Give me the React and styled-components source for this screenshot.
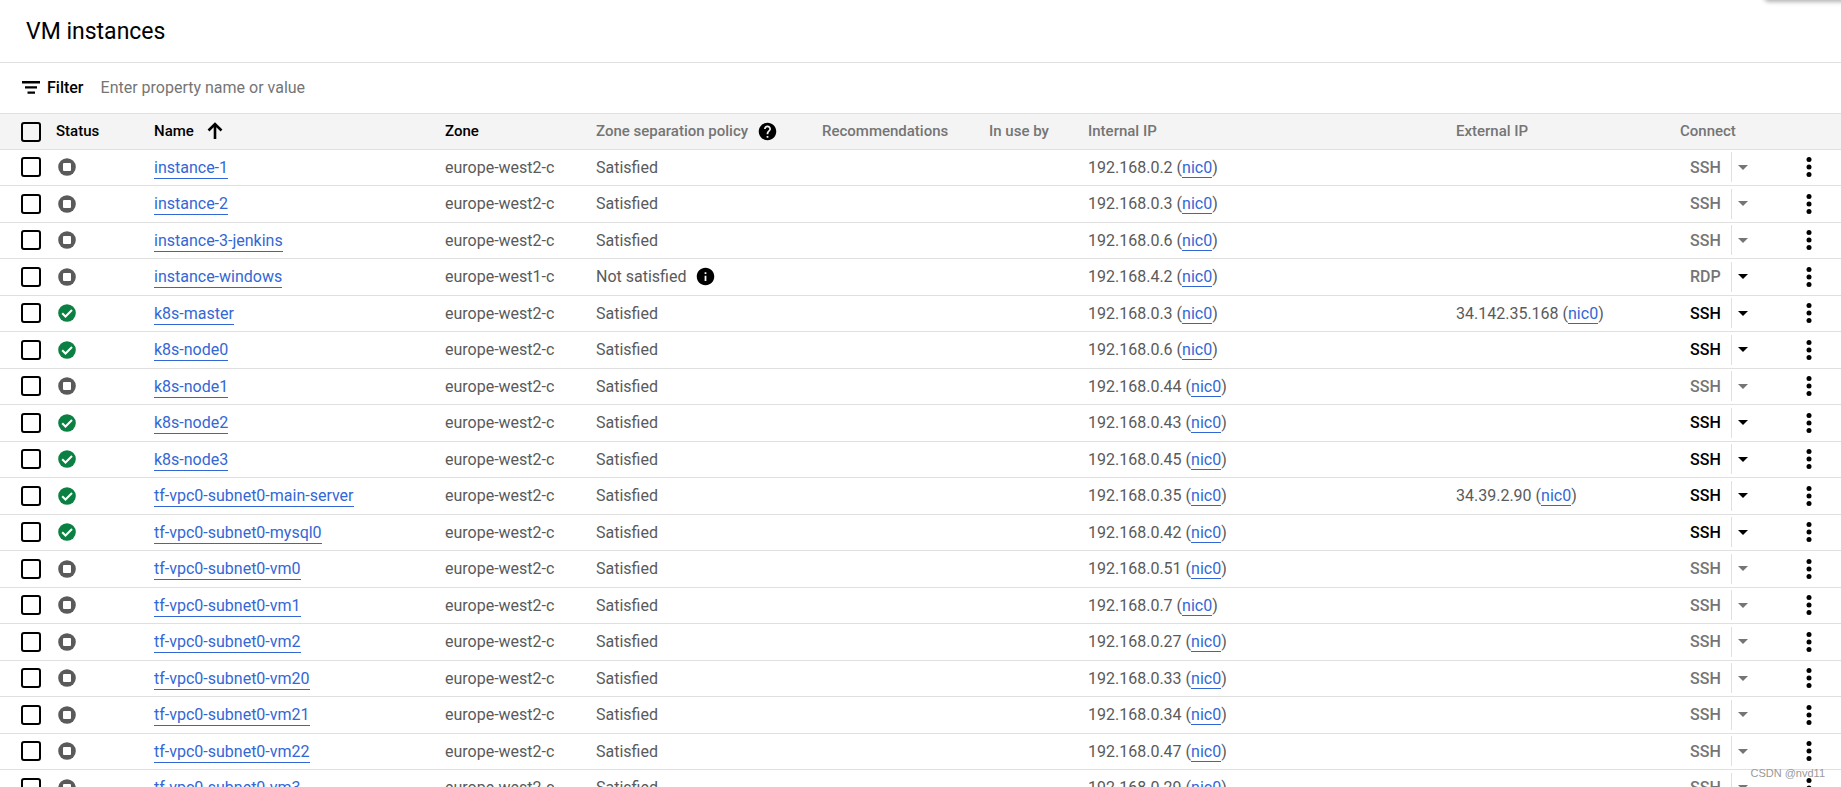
import React from "react";
import styled, { createGlobalStyle, css } from "styled-components";
import { MdHelp, MdInfo } from "react-icons/md";

const stoppedVm = (name, internalIp) => ({
  name,
  internalIp,
  zone: "europe-west2-c",
  policy: "Satisfied",
  connect: "SSH",
  running: false,
});

const runningVm = (name, internalIp, externalIp) => ({
  ...stoppedVm(name, internalIp),
  externalIp,
  running: true,
});

const instances = [
  stoppedVm("instance-1", "192.168.0.2"),
  stoppedVm("instance-2", "192.168.0.3"),
  stoppedVm("instance-3-jenkins", "192.168.0.6"),
  {
    ...stoppedVm("instance-windows", "192.168.4.2"),
    zone: "europe-west1-c",
    policy: "Not satisfied",
    connect: "RDP",
  },
  runningVm("k8s-master", "192.168.0.3", "34.142.35.168"),
  runningVm("k8s-node0", "192.168.0.6"),
  stoppedVm("k8s-node1", "192.168.0.44"),
  runningVm("k8s-node2", "192.168.0.43"),
  runningVm("k8s-node3", "192.168.0.45"),
  runningVm("tf-vpc0-subnet0-main-server", "192.168.0.35", "34.39.2.90"),
  runningVm("tf-vpc0-subnet0-mysql0", "192.168.0.42"),
  stoppedVm("tf-vpc0-subnet0-vm0", "192.168.0.51"),
  stoppedVm("tf-vpc0-subnet0-vm1", "192.168.0.7"),
  stoppedVm("tf-vpc0-subnet0-vm2", "192.168.0.27"),
  stoppedVm("tf-vpc0-subnet0-vm20", "192.168.0.33"),
  stoppedVm("tf-vpc0-subnet0-vm21", "192.168.0.34"),
  stoppedVm("tf-vpc0-subnet0-vm22", "192.168.0.47"),
  stoppedVm("tf-vpc0-subnet0-vm3", "192.168.0.29"),
];

const FilterIcon = () => (
  <svg width="18" height="13" viewBox="0 0 18 13" aria-hidden="true">
    <path d="M0 0h18v2.4H0zM3 5.2h12v2.4H3zM5.5 10.4h7.5v2.4H5.5z" />
  </svg>
);

const SortIcon = () => (
  <svg width="24" height="24" viewBox="0 0 24 24" aria-hidden="true">
    <path
      d="M12 20V5M5.5 11.5 12 5l6.500 6.500"
      fill="none"
      stroke="#000"
      strokeWidth="2.6"
    />
  </svg>
);

const RunningIcon = () => (
  <svg width="18" height="18" viewBox="0 0 18 18" role="img" aria-label="Running">
    <circle cx="9" cy="9" r="8.8" fill="#0b8043" />
    <path d="M4.200 9.300 7.500 12.500 14 6" fill="none" stroke="#fff" strokeWidth="2" />
  </svg>
);

const StoppedIcon = () => (
  <svg width="18" height="18" viewBox="0 0 18 18" role="img" aria-label="Stopped">
    <circle cx="9" cy="9" r="8.8" fill="#5a5a5a" />
    <rect x="5" y="5" width="8" height="8" rx="1" fill="#fff" />
  </svg>
);

const Address = ({ ip }) => (
  <>
    {ip} (<NicLink href="#nic0">nic0</NicLink>)
  </>
);

const InstanceRow = ({ vm }) => (
  <Row>
    <Cell>
      <Checkbox type="checkbox" aria-label={`Select ${vm.name}`} />
    </Cell>
    <Cell>
      <StatusIcon>{vm.running ? <RunningIcon /> : <StoppedIcon />}</StatusIcon>
    </Cell>
    <Cell>
      <NameLink href={`#${vm.name}`}>{vm.name}</NameLink>
    </Cell>
    <Cell>{vm.zone}</Cell>
    <Cell>
      <WithIcon>
        {vm.policy}
        {vm.policy === "Not satisfied" && <MdInfo size={21} color="#000" />}
      </WithIcon>
    </Cell>
    <Cell />
    <Cell />
    <Cell>
      <Address ip={vm.internalIp} />
    </Cell>
    <Cell>{vm.externalIp && <Address ip={vm.externalIp} />}</Cell>
    <Cell>
      <Connect>
        <ConnectButton type="button" $active={vm.running}>
          {vm.connect}
        </ConnectButton>
        <DropButton
          type="button"
          aria-label={`${vm.connect} options`}
          $active={vm.running || vm.connect === "RDP"}
        >
          <svg width="10" height="5" viewBox="0 0 10 5">
            <path d="M0 0h10L5 5z" fill="currentColor" />
          </svg>
        </DropButton>
      </Connect>
    </Cell>
    <Cell>
      <MenuButton type="button" aria-label={`More actions for ${vm.name}`}>
        <svg width="6" height="20" viewBox="0 0 6 20">
          <circle cx="3" cy="2.5" r="2.5" />
          <circle cx="3" cy="10" r="2.5" />
          <circle cx="3" cy="17.5" r="2.5" />
        </svg>
      </MenuButton>
    </Cell>
  </Row>
);

const App = () => {
  const [filter, setFilter] = React.useState("");

  return (
    <Page>
      <GlobalStyle />
      <PanelShadow />
      <TitleBar>
        <Title>VM instances</Title>
      </TitleBar>
      <FilterBar>
        <FilterIcon />
        <FilterLabel htmlFor="filter">Filter</FilterLabel>
        <FilterInput
          type="text"
          id="filter"
          placeholder="Enter property name or value"
          value={filter}
          onChange={(ev) => setFilter(ev.target.value)}
        />
      </FilterBar>
      <Table>
        <colgroup>
          <Col $width={56} />
          <Col $width={98} />
          <Col $width={291} />
          <Col $width={151} />
          <Col $width={226} />
          <Col $width={167} />
          <Col $width={99} />
          <Col />
          <Col $width={224} />
          <Col $width={122} />
          <Col $width={39} />
        </colgroup>
        <thead>
          <tr>
            <HeadCell>
              <Checkbox type="checkbox" aria-label="Select all instances" />
            </HeadCell>
            <HeadCell $sortable>Status</HeadCell>
            <HeadCell $sortable>
              <WithIcon>
                Name
                <SortIcon />
              </WithIcon>
            </HeadCell>
            <HeadCell $sortable>Zone</HeadCell>
            <HeadCell>
              <WithIcon>
                Zone separation policy
                <MdHelp size={21} color="#000" />
              </WithIcon>
            </HeadCell>
            <HeadCell>Recommendations</HeadCell>
            <HeadCell>In use by</HeadCell>
            <HeadCell>Internal IP</HeadCell>
            <HeadCell>External IP</HeadCell>
            <HeadCell>Connect</HeadCell>
            <HeadCell />
          </tr>
        </thead>
        <tbody>
          {instances.map((vm) => (
            <InstanceRow key={vm.name} vm={vm} />
          ))}
        </tbody>
      </Table>
      <Watermark>CSDN @nvd11</Watermark>
    </Page>
  );
};

const GlobalStyle = createGlobalStyle`
  * {
    box-sizing: border-box;
  }
  body {
    margin: 0;
    background: #fff;
    color: #000;
    font-family: Roboto, "Liberation Sans", sans-serif;
    font-size: 16px;
  }
  button, input {
    font: inherit;
  }
`;

const Page = styled.main`
  position: relative;
  height: 100vh;
  overflow: hidden;
`;

/* lower edge of the panel that sits above the page */
const PanelShadow = styled.div`
  position: absolute;
  top: -10px;
  right: -10px;
  width: 86px;
  height: 10px;
  border-radius: 4px;
  box-shadow: 0 1px 4px 1px rgba(0, 0, 0, 0.3);
`;

const TitleBar = styled.header`
  display: flex;
  align-items: center;
  height: 63px;
  padding: 0 26px;
  border-bottom: 1px solid #e0e0e0;
`;

const Title = styled.h1`
  margin: 0;
  font-size: 23px;
  font-weight: 400;
`;

const FilterBar = styled.div`
  display: flex;
  align-items: center;
  height: 50px;
  padding: 0 22px 2px;
`;

const FilterLabel = styled.label`
  margin: 0 17px 0 7px;
  font-weight: 500;
`;

const FilterInput = styled.input`
  flex: 1;
  padding: 0;
  border: none;
  outline: none;
  &::placeholder {
    color: #757575;
    opacity: 1;
  }
`;

const Table = styled.table`
  width: 100%;
  table-layout: fixed;
  border-collapse: separate;
  border-spacing: 0;
`;

const Col = styled.col`
  width: ${({ $width }) => ($width ? `${$width}px` : "auto")};
`;

const cellBase = css`
  padding: 0 0 1px;
  border-bottom: 1px solid #e0e0e0;
  text-align: left;
  vertical-align: middle;
  white-space: nowrap;
  &:first-child {
    padding-left: 21px;
  }
`;

const HeadCell = styled.th`
  ${cellBase}
  height: 37px;
  border-top: 1px solid #e0e0e0;
  background: #f4f4f4;
  color: ${({ $sortable }) => ($sortable ? "#000" : "#757575")};
  font-size: 15px;
  font-weight: 500;
  &:first-child {
    padding-bottom: 0;
  }
`;

const Cell = styled.td`
  ${cellBase}
  height: 36px;
  color: #5a5a5a;
`;

const Row = styled.tr`
  &:nth-child(even) ${Cell} {
    height: 37px;
  }
  &:hover {
    background: #f8f9fa;
  }
`;

const Checkbox = styled.input`
  appearance: none;
  display: block;
  width: 20px;
  height: 20px;
  margin: 0;
  border: 2px solid #000;
  border-radius: 3px;
  &:checked {
    background: #3367d6;
    border-color: #3367d6;
  }
`;

const StatusIcon = styled.div`
  display: flex;
  align-items: center;
  justify-content: center;
  width: 22px;
`;

const WithIcon = styled.div`
  display: flex;
  align-items: center;
  gap: 9px;
`;

const NicLink = styled.a`
  color: #3367d6;
  border-bottom: 1px solid #3367d6;
  text-decoration: none;
`;

const NameLink = styled(NicLink)`
  padding-bottom: 1px;
`;

const Connect = styled.div`
  display: flex;
  align-items: center;
  height: 30px;
`;

const ConnectButton = styled.button`
  padding: 0 10px;
  border: none;
  background: none;
  color: ${({ $active }) => ($active ? "#000" : "#757575")};
  font-weight: 500;
  cursor: pointer;
`;

const DropButton = styled(ConnectButton)`
  display: flex;
  align-items: center;
  height: 30px;
  padding: 0 6px;
  border-left: 1px solid #e0e0e0;
`;

const MenuButton = styled.button`
  display: flex;
  padding: 0 4px;
  border: none;
  background: none;
  cursor: pointer;
`;

const Watermark = styled.div`
  position: absolute;
  right: 16px;
  bottom: 8px;
  color: #999;
  font-family: "Liberation Sans", sans-serif;
  font-size: 11px;
`;

export default App;
